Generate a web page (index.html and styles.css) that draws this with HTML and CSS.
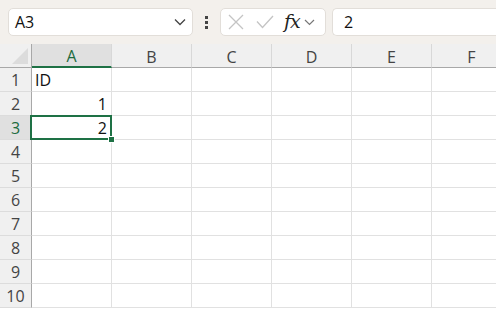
FILE: index.html
```html
<!DOCTYPE html>
<html lang="en">
<head>
  <meta charset="UTF-8" />
  <title>Sheet</title>
  <link rel="stylesheet" href="styles.css">
</head>
<body>

  <!-- Formula bar -->
  <div class="topbar">
    <div class="namebox">
      <span>A3</span>
      <svg class="chev" width="12" height="8" viewBox="0 0 12 8"><path d="M1 1.5 L6 6.5 L11 1.5" fill="none" stroke="#444" stroke-width="1.3"/></svg>
    </div>
    <div class="dots"><i></i><i></i><i></i></div>
    <div class="fxbox">
      <svg width="16" height="16" viewBox="0 0 16 16"><path d="M1 1 L15 15 M15 1 L1 15" stroke="#c4c4c4" stroke-width="1.3"/></svg>
      <svg width="18" height="14" viewBox="0 0 18 14"><path d="M1 6.5 L6.5 12.5 L17 1" fill="none" stroke="#c4c4c4" stroke-width="1.3"/></svg>
      <span class="fx">fx</span>
      <svg width="11" height="7" viewBox="0 0 11 7"><path d="M1 1 L5.5 5.5 L10 1" fill="none" stroke="#777" stroke-width="1.2"/></svg>
    </div>
    <div class="formula">2</div>
  </div>

  <!-- Grid -->
  <div class="sheet">
    <div class="corner"></div>
    <div class="colhead sel">A</div>
    <div class="colhead">B</div>
    <div class="colhead">C</div>
    <div class="colhead">D</div>
    <div class="colhead">E</div>
    <div class="colhead">F</div>

    <div class="rowhead">1</div>
    <div class="cell">ID</div><div class="cell"></div><div class="cell"></div><div class="cell"></div><div class="cell"></div><div class="cell"></div>

    <div class="rowhead">2</div>
    <div class="cell num">1</div><div class="cell"></div><div class="cell"></div><div class="cell"></div><div class="cell"></div><div class="cell"></div>

    <div class="rowhead sel">3</div>
    <div class="cell num active">2<span class="handle"></span></div><div class="cell"></div><div class="cell"></div><div class="cell"></div><div class="cell"></div><div class="cell"></div>

    <div class="rowhead">4</div>
    <div class="cell"></div><div class="cell"></div><div class="cell"></div><div class="cell"></div><div class="cell"></div><div class="cell"></div>
    <div class="rowhead">5</div>
    <div class="cell"></div><div class="cell"></div><div class="cell"></div><div class="cell"></div><div class="cell"></div><div class="cell"></div>
    <div class="rowhead">6</div>
    <div class="cell"></div><div class="cell"></div><div class="cell"></div><div class="cell"></div><div class="cell"></div><div class="cell"></div>
    <div class="rowhead">7</div>
    <div class="cell"></div><div class="cell"></div><div class="cell"></div><div class="cell"></div><div class="cell"></div><div class="cell"></div>
    <div class="rowhead">8</div>
    <div class="cell"></div><div class="cell"></div><div class="cell"></div><div class="cell"></div><div class="cell"></div><div class="cell"></div>
    <div class="rowhead">9</div>
    <div class="cell"></div><div class="cell"></div><div class="cell"></div><div class="cell"></div><div class="cell"></div><div class="cell"></div>
    <div class="rowhead">10</div>
    <div class="cell"></div><div class="cell"></div><div class="cell"></div><div class="cell"></div><div class="cell"></div><div class="cell"></div>
  </div>

</body>
</html>
```

FILE: styles.css
```css
body {
  margin: 0;
  font-family: "Open Sans", "Liberation Sans", Arial, sans-serif;
  color: #222;
  background: #fff;
  overflow: hidden;
  width: 496px;
  height: 310px;
}
.topbar {
  display: flex;
  align-items: center;
  height: 44px;
  padding: 0 0 0 8px;
  background: #f3f0ec;
  box-sizing: border-box;
}
.namebox, .fxbox, .formula {
  height: 28px;
  background: #fff;
  border: 1px solid #e2ded9;
  border-radius: 5px;
  box-sizing: border-box;
  display: flex;
  align-items: center;
}
.namebox {
  width: 185px;
  padding: 0 6px 0 6px;
  justify-content: space-between;
  font-size: 16px;
  color: #111;
}
.dots {
  width: 27px;
  display: flex;
  flex-direction: column;
  align-items: center;
  gap: 2px;
}
.dots i {
  width: 3px;
  height: 3px;
  background: #444;
}
.fxbox {
  width: 106px;
  padding: 0 0 0 7px;
}
.fxbox svg:nth-child(1) { margin-right: 12px; }
.fxbox svg:nth-child(2) { margin-right: 10px; }
.fx {
  font-family: "DejaVu Serif", "Liberation Serif", serif;
  font-style: italic;
  font-size: 19px;
  color: #222;
  margin-right: 4px;
  letter-spacing: -1px;
  margin-top: -2px;
}
.formula {
  flex: 1;
  margin-left: 6px;
  padding-left: 11px;
  font-size: 16px;
  color: #111;
  border-right: none;
  border-radius: 5px 0 0 5px;
}
.sheet {
  display: grid;
  grid-template-columns: 32px repeat(6, 80px);
  grid-auto-rows: 24px;
  font-size: 16px;
}
.corner, .colhead, .rowhead {
  background: #f0f0f0;
  box-sizing: border-box;
  display: flex;
  align-items: center;
  justify-content: center;
  color: #444;
}
.corner {
  border-right: 1px solid #a8a8a8;
  border-bottom: 1px solid #a8a8a8;
  position: relative;
}
.corner::after {
  content: "";
  position: absolute;
  right: 3px;
  bottom: 3px;
  border-left: 16px solid transparent;
  border-bottom: 16px solid #dcdcdc;
}
.colhead {
  border-right: 1px solid #d8d8d8;
  border-bottom: 1px solid #a8a8a8;
  padding-top: 2px;
}
.colhead.sel {
  background: #e0e0e0;
  color: #1c6b3e;
  border-bottom: 2px solid #1e7145;
}
.rowhead {
  border-right: 1px solid #a8a8a8;
  border-bottom: 1px solid #dcdcdc;
}
.rowhead.sel {
  background: #e0e0e0;
  color: #1c6b3e;
}
.cell {
  box-sizing: border-box;
  border-right: 1px solid #e1e1e1;
  border-bottom: 1px solid #e1e1e1;
  padding: 1px 4px 0 3px;
  display: flex;
  align-items: center;
  font-size: 16px;
  color: #111;
}
.cell.num {
  justify-content: flex-end;
}
.cell.active {
  position: relative;
  z-index: 1;
}
.cell.active::before {
  content: "";
  position: absolute;
  top: -1px;
  left: -2px;
  right: -1px;
  bottom: -1px;
  border: 2px solid #1e7145;
}
.handle {
  position: absolute;
  right: -4px;
  bottom: -4px;
  width: 5px;
  height: 5px;
  background: #1e7145;
  border: 1px solid #fff;
}
```
